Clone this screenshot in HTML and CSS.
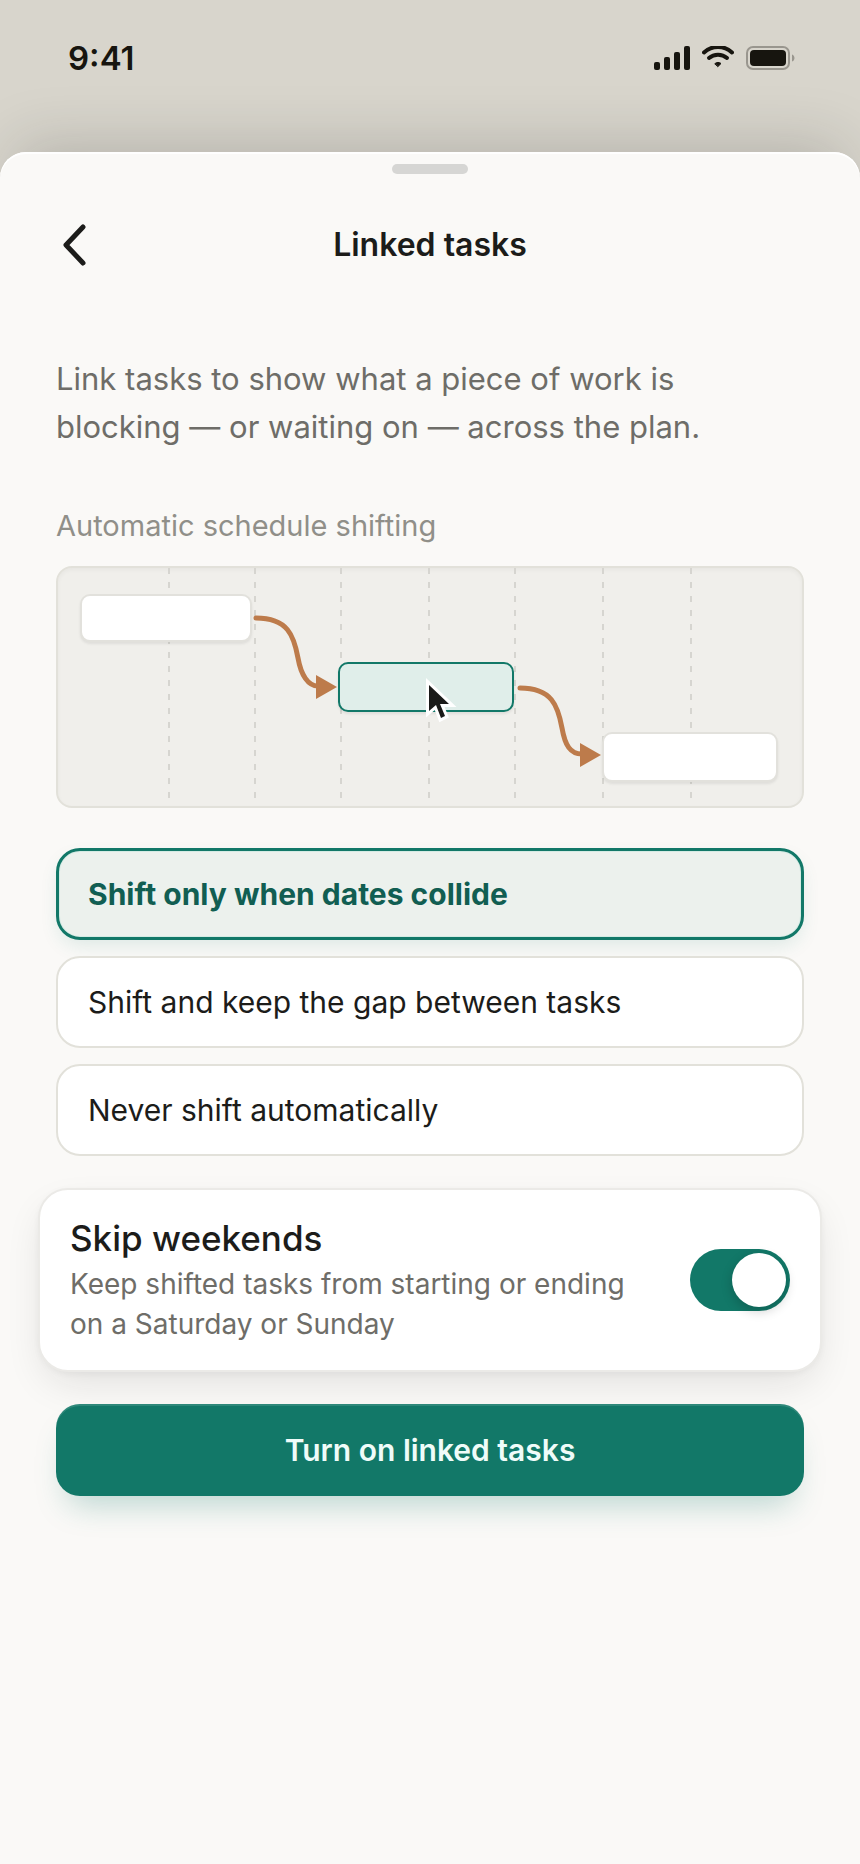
FILE: index.html
```html
<!DOCTYPE html>
<html lang="en">
  <head>
    <meta charset="utf-8" />
    <meta name="viewport" content="width=device-width, initial-scale=1" />
    <title>Linked tasks</title>
    <link rel="stylesheet" href="styles.css" />
  </head>
  <body>
    <div class="status-bar">
      <span class="time">9:41</span>
      <div class="status-icons">
        <svg class="signal" width="36" height="24" viewBox="0 0 36 24">
          <rect x="0" y="16" width="6" height="8" rx="2" />
          <rect x="10" y="11" width="6" height="13" rx="2" />
          <rect x="20" y="6" width="6" height="18" rx="2" />
          <rect x="30" y="0" width="6" height="24" rx="2" />
        </svg>
        <svg class="wifi" width="32" height="24" viewBox="0 0 32 24">
          <path d="M2 6.500C10 -1 22 -1 30 6.500" />
          <path d="M7 12C12 7.500 20 7.500 25 12" />
          <path class="dot" d="M13 17.500C14.500 16 17.500 16 19 17.500L16 20.500Z" />
        </svg>
        <svg class="battery" width="50" height="24" viewBox="0 0 50 24">
          <rect class="shell" x="1" y="1" width="42" height="22" rx="6" />
          <rect class="charge" x="4" y="4" width="36" height="16" rx="4" />
          <path class="cap" d="M46 8.500C49.300 9.500 49.300 14.500 46 15.500Z" />
        </svg>
      </div>
    </div>

    <main class="sheet">
      <div class="handle"></div>

      <header class="nav">
        <button class="back" type="button" aria-label="Back">
          <svg width="24" height="42" viewBox="0 0 24 42">
            <path d="M21 3L4 21L21 39" />
          </svg>
        </button>
        <h1>Linked tasks</h1>
      </header>

      <p class="intro">
        Link tasks to show what a piece of work is<br />
        blocking — or waiting on — across the plan.
      </p>

      <form class="settings">
        <fieldset class="shifting">
          <legend>Automatic schedule shifting</legend>

          <div class="preview">
            <svg viewBox="0 0 744 238" aria-hidden="true">
              <g class="grid">
                <path d="M111 0V232" />
                <path d="M197 0V232" />
                <path d="M283 0V232" />
                <path d="M371 0V232" />
                <path d="M457 0V232" />
                <path d="M545 0V232" />
                <path d="M633 0V232" />
              </g>
              <rect class="task" x="23" y="27" width="170" height="46" rx="9" />
              <rect class="task moved" x="281" y="95" width="174" height="48" rx="9" />
              <rect class="task" x="545" y="165" width="174" height="48" rx="9" />
              <g class="link">
                <path d="M198 50C230 50 236 68 240 90C243 107 250 118 260 118" />
                <path d="M462 120C494 120 500 138 504 160C507 177 512 186 524 186" />
              </g>
              <g class="arrow">
                <path d="M258 107V131L279 119Z" />
                <path d="M522 175V199L543 187Z" />
              </g>
              <path class="cursor" d="M371 117V143L378 137L383 150L387 148L382 136H391Z" />
            </svg>
          </div>

          <div class="options">
            <label class="option">
              <input type="radio" name="shift" value="collide" checked />
              <span>Shift only when dates collide</span>
            </label>
            <label class="option">
              <input type="radio" name="shift" value="gap" />
              <span>Shift and keep the gap between tasks</span>
            </label>
            <label class="option">
              <input type="radio" name="shift" value="never" />
              <span>Never shift automatically</span>
            </label>
          </div>
        </fieldset>

        <div class="card">
          <label class="card-text" for="weekends">
            <span class="card-title">Skip weekends</span>
            <span class="card-note">Keep shifted tasks from starting or ending<br />on a Saturday or Sunday</span>
          </label>
          <input class="switch" id="weekends" type="checkbox" role="switch" checked />
        </div>

        <button class="submit" type="submit">Turn on linked tasks</button>
      </form>
    </main>
  </body>
</html>
```

FILE: styles.css
```css
:root {
  --green: #127868;
  --ink: #1c1c1a;
  --muted: #6e6d68;
  --line: #e2e1da;
}
* {
  box-sizing: border-box;
}
body {
  margin: 0;
  min-height: 100vh;
  display: flex;
  flex-direction: column;
  background: #d8d5cc;
  color: var(--ink);
  font-family: Inter, "Liberation Sans", sans-serif;
}
button,
input {
  font: inherit;
  margin: 0;
}

.status-bar {
  display: flex;
  align-items: center;
  justify-content: space-between;
  height: 152px;
  padding: 0 64px 36px 68px;
  color: #17150f;
}
.time {
  font-size: 33px;
  font-weight: 600;
}
.status-icons {
  display: flex;
  gap: 12px;
}
.status-icons svg {
  fill: currentColor;
}
.wifi path {
  fill: none;
  stroke: currentColor;
  stroke-width: 4;
  stroke-linecap: round;
}
.wifi .dot {
  fill: currentColor;
  stroke-width: 1;
  stroke-linejoin: round;
}
.battery .shell {
  fill: none;
  stroke: #99968e;
  stroke-width: 2;
}
.battery .cap {
  fill: #99968e;
}

.sheet {
  flex: 1;
  padding: 12px 56px 56px;
  border-radius: 26px 26px 0 0;
  background: #faf9f7;
  box-shadow: 0 -24px 60px -16px rgba(28, 28, 26, 0.18), inset 0 2px 0 #fff;
}
.handle {
  width: 76px;
  height: 10px;
  margin: 0 auto;
  border-radius: 5px;
  background: #d6d6d4;
}
.nav {
  display: grid;
  grid-template-columns: 48px 1fr 48px;
  align-items: center;
  height: 60px;
  margin-top: 41px;
}
.back {
  display: flex;
  padding: 6px;
  border: 0;
  background: none;
}
.back path {
  fill: none;
  stroke: var(--ink);
  stroke-width: 5;
  stroke-linecap: round;
  stroke-linejoin: round;
}
h1 {
  margin: 0;
  font-size: 32px;
  font-weight: 600;
  line-height: 40px;
  text-align: center;
}
.intro {
  margin: 80px 0 0;
  color: var(--muted);
  font-size: 31px;
  line-height: 48px;
}

.settings {
  margin-top: 55px;
}
.shifting {
  margin: 0;
  padding: 0;
  border: 0;
}
.shifting legend {
  padding: 0;
  color: #908f89;
  font-size: 29px;
  line-height: 40px;
}
.preview {
  margin-top: 20px;
  border: 2px solid var(--line);
  border-radius: 16px;
  background: #f0efeb;
  box-shadow: inset 0 2px 4px rgba(28, 28, 26, 0.04);
}
.preview svg {
  display: block;
  width: 100%;
}
.grid {
  stroke: #d6d5d0;
  stroke-width: 2;
  stroke-dasharray: 6 8;
}
.task {
  fill: #fff;
  stroke: #e2e1dc;
  stroke-width: 2;
  filter: drop-shadow(0 2px 1px rgba(28, 28, 26, 0.08));
}
.task.moved {
  fill: #e0eeea;
  stroke: var(--green);
}
.link {
  fill: none;
  stroke: #bd7b4b;
  stroke-width: 5;
  stroke-linecap: round;
}
.arrow {
  fill: #bd7b4b;
}
.cursor {
  fill: #1a1a18;
  stroke: #fff;
  stroke-width: 6;
  paint-order: stroke;
}

.options {
  display: flex;
  flex-direction: column;
  gap: 16px;
  margin-top: 40px;
}
.option {
  display: flex;
  align-items: center;
  height: 92px;
  padding: 0 30px;
  border: 2px solid var(--line);
  border-radius: 24px;
  background: #fff;
  font-size: 30px;
}
.option input {
  position: absolute;
  opacity: 0;
}
.option:has(:checked) {
  padding: 0 29px;
  border: 3px solid var(--green);
  background: #ecf1ed;
  box-shadow: 0 8px 20px -4px rgba(18, 120, 104, 0.14), inset 0 0 0 1px #d5ebe4;
  color: #115e52;
  font-weight: 700;
}

.card {
  display: flex;
  align-items: center;
  justify-content: space-between;
  margin: 32px -18px 0;
  padding: 26px 30px;
  border: 2px solid #ebeae7;
  border-radius: 30px;
  background: #fff;
  box-shadow: 0 16px 40px -8px rgba(28, 28, 26, 0.12), 0 2px 6px rgba(28, 28, 26, 0.04);
}
.card-title,
.card-note {
  display: block;
}
.card-title {
  margin-bottom: 4px;
  font-size: 35px;
  font-weight: 500;
  line-height: 44px;
}
.card-note {
  color: var(--muted);
  font-size: 28px;
  line-height: 40px;
}
.switch {
  appearance: none;
  flex: none;
  display: flex;
  width: 100px;
  height: 62px;
  padding: 4px;
  border-radius: 31px;
  background: #c9c8c3;
}
.switch:checked {
  justify-content: flex-end;
  background: var(--green);
}
.switch::before {
  content: "";
  width: 54px;
  height: 54px;
  border-radius: 50%;
  background: #fff;
  box-shadow: 0 4px 12px rgba(0, 0, 0, 0.2);
}

.submit {
  display: block;
  width: 100%;
  height: 92px;
  margin-top: 32px;
  border: 0;
  border-radius: 24px;
  background: var(--green);
  box-shadow: 0 20px 32px -12px rgba(18, 120, 104, 0.28), inset 0 2px 0 rgba(255, 255, 255, 0.12);
  color: #effcf9;
  font-size: 30px;
  font-weight: 600;
}
```
